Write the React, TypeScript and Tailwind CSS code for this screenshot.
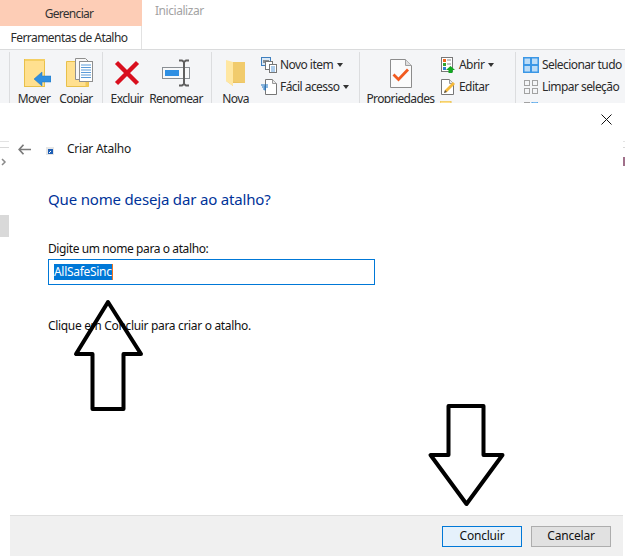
const font = "[font-family:'Noto_Sans','Open_Sans',sans-serif]";

function Sep() {
  return <div className="w-px shrink-0 mt-[2px] bg-[#dcdddf]" />;
}

function Caret() {
  return <span className="ml-[4px] mt-[-1px] w-0 h-0 border-x-[3.5px] border-x-transparent border-t-[4px] border-t-[#333]" />;
}

function Big({ w, label, iconClass, children }: { w: number; label: string; iconClass?: string; children: React.ReactNode }) {
  return (
    <div className="flex flex-col items-center shrink-0 pt-[7px]" style={{ width: w }}>
      <div className={`h-[32px] shrink-0 flex items-center justify-center ${iconClass ?? ""}`}>{children}</div>
      <div className="shrink-0 mt-[2px] text-[12px] leading-[16px] tracking-[-0.62px] text-[#2b2b2b] whitespace-nowrap">{label}</div>
    </div>
  );
}

function Small({ label, caret, children }: { label: string; caret?: boolean; children: React.ReactNode }) {
  return (
    <div className="h-[22px] flex items-center whitespace-nowrap text-[12px] tracking-[-0.55px] text-[#2b2b2b]">
      <div className="w-[16px] h-[16px] mr-[3px] flex items-center justify-center">{children}</div>
      {label}
      {caret && <Caret />}
    </div>
  );
}

const MoverIcon = () => (
  <svg width="27" height="30" viewBox="0 0 27 30">
    <rect x="0.5" y="1.5" width="20" height="27" fill="#ffe08f" stroke="#e8c04a" />
    <path d="M1 1h20v2H1z" fill="#f4cf63" />
    <path d="M10 21l8-7v4h9v6h-9v4z" fill="#2f8fe0" stroke="#1f74c2" strokeWidth="0.5" />
  </svg>
);
const CopiarIcon = () => (
  <svg width="27" height="31" viewBox="0 0 27 31">
    <path d="M0.5 3.5h22v25H0.5z" fill="#ffe08f" stroke="#e8c04a" />
    <path d="M22.5 18.5v10h-3v-8z" fill="#f2c95a" />
    <path d="M9.5 0.5h10l4 4v17h-14z" fill="#f7f7f7" stroke="#8f8f8f" />
    <rect x="13.5" y="3.5" width="13" height="20" fill="#fff" stroke="#8f8f8f" />
    <path d="M15 7h10M15 9.5h10M15 12h10M15 14.5h10M15 17h10M15 19.5h10" stroke="#5b9bd9" strokeWidth="1.2" />
  </svg>
);
const XIcon = () => (
  <svg width="26" height="26" viewBox="0 0 26 26">
    <path d="M2.5 2.5L23.5 23.5M23.5 2.5L2.5 23.5" stroke="#d90f1e" strokeWidth="4.4" />
  </svg>
);
const RenameIcon = () => (
  <svg width="29" height="28" viewBox="0 0 29 28">
    <rect x="0.5" y="8.5" width="27" height="11" fill="#f7f8f9" stroke="#8a8f94" />
    <rect x="3" y="11" width="14" height="6" fill="#2e8fe3" />
    <path d="M17 1.5h3l2 1.5 2-1.5h3M22 3v22M17 26.5h3l2-1.5 2 1.5h3" fill="none" stroke="#5f5f5f" strokeWidth="2" />
  </svg>
);
const FolderIcon = () => (
  <svg width="20" height="28" viewBox="0 0 20 28">
    <path d="M7 3h12v21H7z" fill="#f1cb6c" />
    <path d="M0 22l7 5v-3h12z" fill="#e5bb57" opacity="0.7" />
    <path d="M0 1l7 2v24l-7-5z" fill="#ffe7a2" />
  </svg>
);
const NovoItemIcon = () => (
  <svg width="16" height="16" viewBox="0 0 16 16">
    <rect x="0.5" y="0.5" width="9" height="8" fill="#dbe9f6" stroke="#3e7fbf" />
    <rect x="2" y="3" width="6" height="3" fill="#8a8f94" />
    <rect x="4.5" y="4.5" width="7" height="8" fill="#fff" stroke="#777" />
    <rect x="8.5" y="7.5" width="7" height="8" fill="#fff" stroke="#777" />
    <path d="M10 10h4M10 12h4M10 14h4" stroke="#5b9bd9" />
  </svg>
);
const FacilIcon = () => (
  <svg width="16" height="16" viewBox="0 0 16 16">
    <path d="M4.5 0.5h7l4 4v11h-11z" fill="#fff" stroke="#777" />
    <path d="M11.5 0.5v4h4" fill="#e8e8e8" stroke="#999" />
    <path d="M0 6h7M1 8h6M2 10h3" stroke="#1f74c2" strokeWidth="1.2" />
    <path d="M4 6.5v5" stroke="#1f74c2" />
  </svg>
);
const PropsIcon = () => (
  <svg width="22" height="29" viewBox="0 0 22 29">
    <path d="M0.5 0.5h15l6 6v22H0.5z" fill="#fbfbfb" stroke="#8c8c8c" />
    <path d="M15.5 0.5v6h6" fill="#dedede" stroke="#a0a0a0" />
    <path d="M3.5 15.5l5 5 9.5-10" fill="none" stroke="#f15a1f" strokeWidth="2.8" />
  </svg>
);
const AbrirIcon = () => (
  <svg width="14" height="16" viewBox="0 0 14 16">
    <rect x="0.5" y="0.5" width="11" height="14" fill="#fff" stroke="#777" />
    <rect x="2" y="2" width="3" height="3" fill="#f0641e" />
    <rect x="2" y="6" width="3" height="3" fill="#2fa32f" />
    <rect x="2" y="10" width="3" height="3" fill="#2f7fd0" />
    <path d="M6 3h4M6 7h4" stroke="#888" />
    <path d="M9.5 9l4.5 4h-2.5v3h-4v-3H5z" fill="#11a821" />
  </svg>
);
const EditarIcon = () => (
  <svg width="15" height="16" viewBox="0 0 15 16">
    <path d="M0.5 0.5h8l4 4v11h-12z" fill="#fff" stroke="#777" />
    <path d="M8.5 0.5v4h4" fill="#e8e8e8" stroke="#999" />
    <path d="M3 14l1-3 8-8 2 2-8 8z" fill="#f5b93a" />
    <path d="M3 14l1-3 2 2z" fill="#555" />
  </svg>
);
const NoteIcon = () => (
  <svg width="16" height="16" viewBox="0 0 16 16">
    <rect x="0" y="0" width="11" height="16" fill="#ffe08f" stroke="#e8c04a" />
  </svg>
);
const SelectAll = () => (
  <svg width="16" height="16" viewBox="0 0 16 16">
    <rect x="0" y="0" width="16" height="16" fill="#3b97e6" />
    <rect x="1.5" y="1.5" width="5.5" height="5.5" fill="#bcdcf6" />
    <rect x="9" y="1.5" width="5.5" height="5.5" fill="#bcdcf6" />
    <rect x="1.5" y="9" width="5.5" height="5.5" fill="#bcdcf6" />
    <rect x="9" y="9" width="5.5" height="5.5" fill="#bcdcf6" />
  </svg>
);
const ClearSel = () => (
  <svg width="14" height="14" viewBox="0 0 14 14" fill="none" stroke="#a2a2a2">
    <rect x="0.5" y="0.5" width="5" height="5" />
    <rect x="8.5" y="0.5" width="5" height="5" />
    <rect x="0.5" y="8.5" width="5" height="5" />
    <rect x="8.5" y="8.5" width="5" height="5" />
  </svg>
);
const InvertSel = () => (
  <svg width="14" height="14" viewBox="0 0 14 14" fill="none">
    <rect x="0.5" y="0.5" width="5" height="5" stroke="#a2a2a2" />
    <rect x="8" y="0" width="6" height="6" fill="#bcdcf6" stroke="#3b97e6" />
  </svg>
);

function Ribbon() {
  return (
    <div className="flex h-[54px] shrink-0 overflow-hidden bg-[#f4f5f7] border-t border-[#dadbdc]">
      <div className="w-[9px] shrink-0" />
      <Sep />
      <div className="w-[92px] shrink-0 flex">
        <div className="w-[4px] shrink-0" />
        <Big w={40} label="Mover" iconClass="ml-[6px]"><MoverIcon /></Big>
        <Big w={44} label="Copiar" iconClass="ml-[6px]"><CopiarIcon /></Big>
      </div>
      <Sep />
      <div className="w-[108px] shrink-0 flex">
        <Big w={48} label="Excluir"><XIcon /></Big>
        <Big w={50} label="Renomear"><RenameIcon /></Big>
      </div>
      <Sep />
      <div className="w-[147px] shrink-0 flex">
        <Big w={47} label="Nova"><FolderIcon /></Big>
        <div className="pt-[4px] ml-[2px]">
          <Small label="Novo item" caret><NovoItemIcon /></Small>
          <Small label="Fácil acesso" caret><FacilIcon /></Small>
        </div>
      </div>
      <Sep />
      <div className="w-[155px] shrink-0 flex">
        <Big w={81} label="Propriedades"><PropsIcon /></Big>
        <div className="pt-[4px] ml-[-1px]">
          <Small label="Abrir" caret><AbrirIcon /></Small>
          <Small label="Editar"><EditarIcon /></Small>
          <Small label=""><NoteIcon /></Small>
        </div>
      </div>
      <Sep />
      <div className="pt-[4px] pl-[7px] shrink-0">
        <Small label="Selecionar tudo"><SelectAll /></Small>
        <Small label="Limpar seleção"><ClearSel /></Small>
        <Small label=""><InvertSel /></Small>
      </div>
    </div>
  );
}

function Sidebar() {
  return (
    <div className="w-[9px] shrink-0 flex flex-col">
      <div className="h-[38px] shrink-0" />
      <div className="h-px shrink-0 bg-[#e3e3e3]" />
      <div className="h-[5px] shrink-0" />
      <div className="h-px shrink-0 bg-[#d8d8d8]" />
      <div className="h-[10px] shrink-0" />
      <svg width="6" height="8" viewBox="0 0 6 8" className="ml-px shrink-0">
        <path d="M1 1l3 3-3 3" fill="none" stroke="#8a8a8a" strokeWidth="1.5" />
      </svg>
      <div className="h-[49px] shrink-0" />
      <div className="h-[22px] shrink-0 bg-[#d9d9d9]" />
    </div>
  );
}

function Dialog() {
  return (
    <div className="w-[614px] shrink-0 bg-white flex flex-col relative">
      <div className="h-[31px] shrink-0 flex justify-end items-center pr-[11px] pt-[1px]">
        <svg width="11" height="11" viewBox="0 0 11 11">
          <path d="M0.5 0.5l10 10M10.5 0.5l-10 10" stroke="#111" strokeWidth="1" />
        </svg>
      </div>
      <div className="h-[28px] shrink-0 mt-[1px] flex items-center pl-[9px]">
        <svg width="13" height="11" viewBox="0 0 13 11">
          <path d="M5.5 0.8L1.2 5.5l4.3 4.7M1.5 5.5H13" fill="none" stroke="#7a7a7a" strokeWidth="1.7" />
        </svg>
        <svg width="8" height="8" viewBox="0 0 8 8" className="ml-[15px] mt-[3px]">
          <rect width="8" height="8" fill="#e6e6e6" />
          <rect x="2" y="2" width="5" height="5" fill="#1f5fb5" />
          <path d="M3 6l2-2" stroke="#fff" />
        </svg>
        <span className="ml-[13px] text-[12px] tracking-[-0.25px] text-[#1a1a1a]">Criar Atalho</span>
      </div>
      <div className="flex-1 pl-[39px] pt-[26px]">
        <div className="text-[15px] leading-[20px] tracking-[-0.17px] text-[#003399]">Que nome deseja dar ao atalho?</div>
        <div className="mt-[32px] text-[12px] leading-[16px] tracking-[-0.4px] text-[#111]">Digite um nome para o atalho:</div>
        <div className="mt-[2px] w-[327px] h-[26px] border border-[#0078d7] flex items-center pl-[5px] text-[12px] tracking-[-0.3px] bg-white">
          <span className="bg-[#0078d7] text-white leading-[16px]">AllSafeSinc</span>
          <span className="w-px h-[16px] bg-[#f0741e]" />
        </div>
        <div className="mt-[33px] text-[12px] leading-[16px] tracking-[-0.33px] text-[#111]">Clique em Concluir para criar o atalho.</div>
      </div>
      <div className="h-[41px] shrink-0 ml-px bg-[#f0f0f0] border-t border-[#dfdfdf] flex justify-end items-center gap-[9px] pr-[12px]">
        <button className="w-[80px] h-[21px] bg-[#e5f1fb] border border-[#0078d7] text-[12px] tracking-[-0.2px] text-[#111]">Concluir</button>
        <button className="w-[80px] h-[21px] bg-[#e1e1e1] border border-[#adadad] text-[12px] tracking-[-0.2px] text-[#111]">Cancelar</button>
      </div>
    </div>
  );
}

export default function App() {
  return (
    <div className={`relative w-[625px] h-[556px] overflow-hidden bg-white flex flex-col ${font}`}>
      <div className="flex h-[26px] shrink-0">
        <div className="w-[142px] bg-[#fdcdb6] flex items-center justify-center text-[12px] tracking-[-0.7px] text-[#333] pt-[1px] pr-[4px]">Gerenciar</div>
        <div className="ml-[13px] pb-[4px] flex items-center text-[12px] tracking-[-0.45px] text-[#a3a3a3]">Inicializar</div>
      </div>
      <div className="h-[23px] w-[142px] shrink-0 border-r border-[#e2e2e2] flex items-center justify-center pr-[3px] text-[12px] tracking-[-0.55px] text-[#2b2b2b]">Ferramentas de Atalho</div>
      <Ribbon />
      <div className="flex flex-1 min-h-0">
        <Sidebar />
        <Dialog />
        <div className="flex-1 flex flex-col">
          <div className="h-[38px] shrink-0" />
          <div className="h-px shrink-0 bg-[#e3e3e3]" />
          <div className="h-[5px] shrink-0" />
          <div className="h-px shrink-0 bg-[#d8d8d8]" />
          <div className="h-[9px] shrink-0" />
          <div className="h-[9px] shrink-0 bg-[#a0708a]" />
        </div>
      </div>
      <svg width="75" height="116" viewBox="0 0 75 116" className="absolute left-[71px] top-[298px] pointer-events-none">
        <path d="M37 4L5 56h16.5v55h31V56H70z" fill="none" stroke="#000" strokeWidth="4" strokeLinejoin="round" />
      </svg>
      <svg width="80" height="106" viewBox="0 0 80 106" className="absolute left-[427px] top-[402px] pointer-events-none">
        <path d="M21.5 4h35v49h19L39.5 102 3.5 53h18z" fill="none" stroke="#000" strokeWidth="4" strokeLinejoin="round" />
      </svg>
    </div>
  );
}
